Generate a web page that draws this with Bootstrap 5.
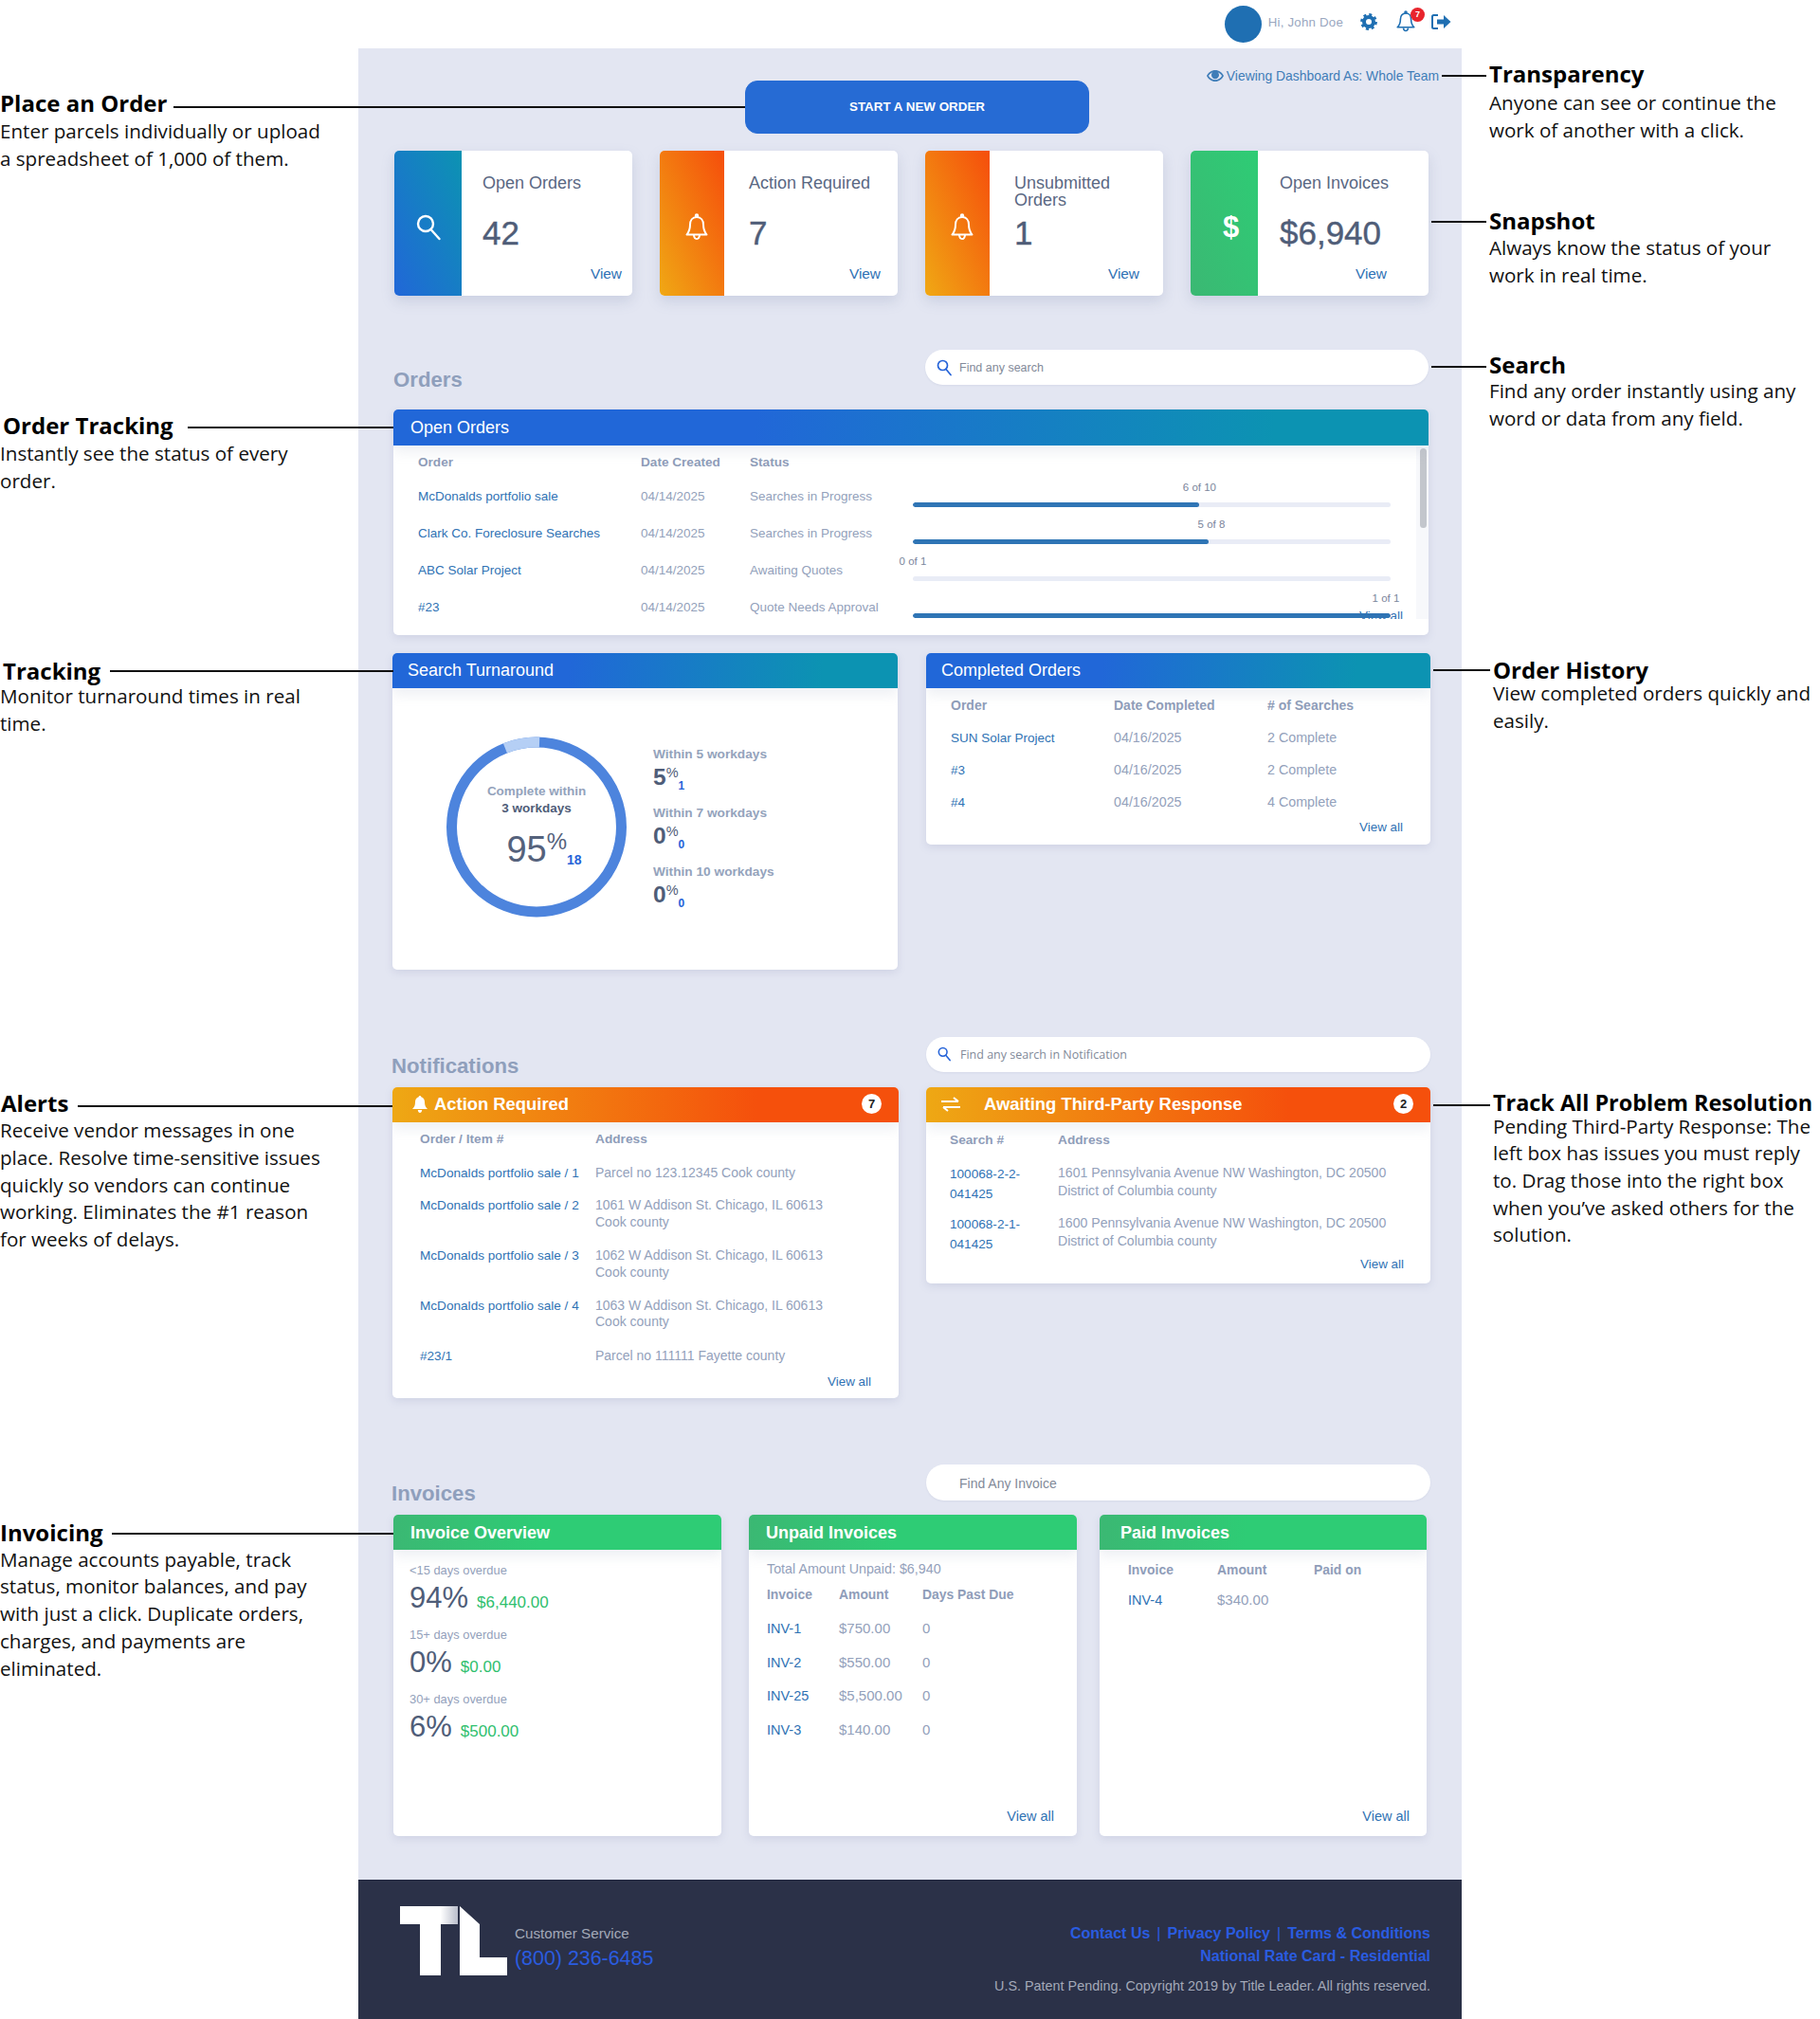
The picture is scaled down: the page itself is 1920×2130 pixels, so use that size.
<!DOCTYPE html>
<html lang="en">

<head>
    <meta charset="UTF-8" />
    <meta name="viewport" content="width=device-width, initial-scale=1.0" />
    <title>Title Leader Dashboard</title>
    <link href="https://cdn.jsdelivr.net/npm/bootstrap@5.3.0/dist/css/bootstrap.min.css" rel="stylesheet" />
    <style>
        body { background: #fff; font-family: "Liberation Sans", Arial, sans-serif; color: #4f5d78; }
        a { text-decoration: none; color: #2f72b4; }
        .page-wrap { width: 1920px; height: 2130px; overflow: hidden; }
        .side-col { width: 378px; flex: none; }
        .main-col { width: 1164px; flex: none; background: #e3e6f2; }

        /* side notes */
        .note { position: relative; font-family: "Open Sans", sans-serif; color: #111; }
        .note-title { font-size: 24px; font-weight: 700; line-height: 30px; color: #000; white-space: nowrap; }
        .note-body { font-size: 20.6px; line-height: 28.7px; white-space: nowrap; }
        .leader { position: absolute; height: 2px; background: #111; z-index: 5; }
        .n1 { margin-top: 94px; }
        .n1 .leader { left: 183px; width: 603px; top: 18px; }
        .n2 { margin-top: 253px; }
        .n2 .note-title, .n3 .note-title { padding-left: 3px; }
        .n2 .leader { left: 198px; width: 217px; top: 16px; }
        .n3 { margin-top: 171px; }
        .n3 .note-title { margin-bottom: -3px; }
        .n3 .leader { left: 116px; width: 299px; top: 14px; }
        .n4 { margin-top: 372px; }
        .n4 .note-title { padding-left: 1px; margin-bottom: -1px; }
        .n4 .leader { left: 82px; width: 332px; top: 17px; }
        .n5 { margin-top: 280px; }
        .n5 .note-title { margin-bottom: -1px; }
        .n5 .leader { left: 118px; width: 297px; top: 15px; }
        .r1, .r2, .r3 { padding-left: 29px; }
        .r4, .r5 { padding-left: 33px; }
        .r1 { margin-top: 63px; }
        .r1 .note-title { margin-bottom: 1px; }
        .r2 .note-title { margin-bottom: -1px; }
        .r3 .note-title { margin-bottom: -2px; }
        .r1 .leader { left: -21px; width: 47px; top: 16px; }
        .r2 { margin-top: 67px; }
        .r2 .leader { left: -32px; width: 58px; top: 15px; }
        .r3 { margin-top: 65px; }
        .r3 .leader { left: -32px; width: 58px; top: 16px; }
        .r4 { margin-top: 237px; }
        .r4 .note-title { margin-bottom: -5px; }
        .r4 .leader { left: -30px; width: 60px; top: 14px; }
        .r5 { margin-top: 373px; }
        .r5 .note-title { margin-bottom: -4px; font-size: 23.4px; }
        .r5 .leader { left: -30px; width: 60px; top: 17px; }

        /* top bar */
        .top-strip { height: 51px; background: #fff; padding-right: 11px; }
        .avatar-dot { width: 39px; height: 39px; border-radius: 50%; background: #1f6fb2; margin-right: 7px; }
        .hello-text { font-size: 13.3px; color: #9aa7bf; margin: 0 18px 3px 0; letter-spacing: .2px; }
        .top-icon { margin-bottom: 6px; }
        .bell-wrap { position: relative; width: 22px; height: 24px; margin: 0 16px 6px 19px; }
        .bell-count { position: absolute; top: -3px; right: -9px; width: 15px; height: 15px; border-radius: 50%; background: #e8242c; color: #fff; font-size: 9px; font-weight: 700; line-height: 15px; text-align: center; }

        .order-row { padding: 21px 24px 0 408px; }
        .start-btn { width: 363px; height: 56px; margin-top: 13px; background: #266bd4; border-color: #266bd4; border-radius: 13px; color: #fff; font-size: 13.4px; font-weight: 700; }
        .view-as { font-size: 13.9px; line-height: 16px; color: #3f7db8; gap: 3px; }

        /* stat cards */
        .stat-row { margin: 18px 35px 0 38px; gap: 29px; }
        .stat-box { flex: 1 1 0; height: 153px; border: 0; border-radius: 5px; box-shadow: 0 6px 14px rgba(120, 130, 170, .22); overflow: hidden; flex-direction: row; }
        .stat-side { width: 68px; flex: none; color: #fff; padding-top: 8px; }
        .stat-side-wide { width: 71px; }
        .grad-blue { background: linear-gradient(to top right, #2167d8, #0c93b2); }
        .grad-orange { background: linear-gradient(to top right, #f0a814, #f5520c 95%); padding-left: 10px; }
        .grad-green { background: linear-gradient(to top right, #3bb873, #2ecc75); padding-left: 14px; }
        .dollar-sign { font-size: 31px; font-weight: 700; line-height: 1; }
        .stat-main { position: relative; flex: 1; padding: 25px 0 0 22px; }
        .stat-main-b { padding-left: 26px; }
        .stat-main-c { padding-left: 23px; }
        .stat-title { font-size: 18px; line-height: 18px; height: 36px; color: #5a6883; }
        .stat-num { font-size: 35px; line-height: 40px; margin-top: 6px; color: #4f5d78; -webkit-text-stroke: .4px #4f5d78; }
        .stat-link { position: absolute; right: 11px; bottom: 14px; font-size: 15.4px; line-height: 18px; }
        .stat-link-a { right: 18px; }
        .stat-link-c { right: 25px; }
        .stat-link-b { right: 44px; }

        /* section heads */
        .section-head { margin-left: 37px; margin-right: 35px; height: 63px; }
        .section-head-tall { margin-right: 33px; height: 53px; margin-left: 35px; }
        .gap-orders { margin-top: 57px; }
        .gap-notif { margin-top: 71px; }
        .gap-invoices { margin-top: 70px; }
        .section-name { font-size: 22.2px; line-height: 28px; font-weight: 700; color: #8f9fbc; margin-top: 18px; }
        .section-head-tall .section-name { margin-top: 17px; }
        .find-box { position: relative; width: 531px; }
        .section-head-tall .find-box { width: 532px; }
        .find-box .form-control { height: 37px; border: 0; border-radius: 19px; padding: 0 12px 0 36px; font-size: 12.5px; box-shadow: 0 1px 2px rgba(120, 130, 170, .12); }
        .find-box .form-control::placeholder { color: #828a99; opacity: 1; }
        .find-box svg { position: absolute; left: 12px; top: 10px; }
        .find-open .form-control { font-family: "Open Sans", sans-serif; }
        .find-plain .form-control { font-size: 14px; height: 38px; padding: 2px 12px 0 35px; }

        /* panels */
        .panel { border: 0; border-radius: 5px; box-shadow: 0 3px 9px rgba(120, 130, 170, .18); overflow: hidden; }
        .panel-head { height: 37px; border: 0; border-radius: 0 !important; padding: 0 0 0 18px; color: #fff; font-size: 18px; line-height: 37px; box-shadow: 0 7px 13px rgba(150, 160, 185, .16); position: relative; z-index: 1; display: flex; align-items: center; }
        .head-blue { background: linear-gradient(95deg, #2167d8 35%, #0c93b2 85%); }
        .head-orange { background: linear-gradient(90deg, #eea814, #f5500c 72%); font-weight: 700; font-size: 18.4px; padding-bottom: 2px; }
        .head-green { background: linear-gradient(95deg, #3bb873, #2ecc75 45%); font-weight: 700; padding-top: 2px; }
        .count-dot { width: 21px; height: 21px; border-radius: 50%; background: #fff; color: #222; font-size: 13px; font-weight: 700; line-height: 21px; text-align: center; margin-left: auto; }

        .data-table { table-layout: fixed; margin: 0; font-size: 13.6px; line-height: 17px; }
        .data-table th, .data-table td { padding: 0; background: transparent; color: #93a1bb; vertical-align: top; font-weight: 400; }
        .data-table th { font-weight: 700; color: #8f9db9; }
        .data-table td a { color: #2f72b4; }
        .more-link { font-size: 13.4px; line-height: 18px; display: block; text-align: right; }

        .panel-open { margin: 0 35px 0 37px; height: 238px; }
        .panel-open .panel-head { height: 38px; }
        .open-scroll { position: relative; height: 183px; overflow: hidden; }
        .tbl-open { margin-left: 26px; width: 1026px; font-size: 13.5px; }
        .tbl-open th { height: 34px; line-height: 30px; padding-top: 3px; font-size: 13.6px; }
        .tbl-open td { height: 39px; padding-top: 11px; }
        .tbl-open th:nth-child(1) { width: 235px; }
        .tbl-open th:nth-child(2) { width: 115px; }
        .tbl-open th:nth-child(3) { width: 172px; }
        .tbl-open th:nth-child(4) { width: 504px; }
        .tbl-open td.prog-cell { padding-top: 26px; position: relative; }
        .prog-track { position: relative; }
        .prog-track .progress { height: 5px; background: #e9ecf6; border-radius: 3px; }
        .prog-track .progress-bar { background: #2f75b5; border-radius: 3px; }
        .prog-label { position: absolute; top: -23px; transform: translateX(-50%); font-size: 11.5px; line-height: 14px; color: #7b869c; white-space: nowrap; }
        .scroll-track { position: absolute; top: 1px; right: 0; width: 13px; bottom: 0; background: #f7f8fb; }
        .scroll-thumb { position: absolute; top: 2px; left: 4px; width: 7px; height: 84px; border-radius: 4px; background: #c3c6cc; }
        .open-more { position: absolute; right: 27px; bottom: -6px; }

        .pair-row { margin: 19px 33px 0 36px; gap: 30px; align-items: flex-start; }
        .panel-turn { width: 533px; height: 334px; }
        .panel-turn .panel-head { padding-left: 16px; }
        .panel-done { width: 532px; height: 202px; }
        .panel-done .panel-head { padding-left: 16px; }
        .turn-body { padding: 51px 0 0 57px; gap: 28px; }
        .ring-wrap { position: relative; width: 190px; height: 191px; flex: none; }
        .ring-text { position: absolute; inset: 0; text-align: center; padding-top: 49px; font-size: 13.5px; line-height: 18px; font-weight: 700; color: #94a3bc; }
        .ring-days { color: #4f5d78; }
        .ring-num { font-size: 38px; line-height: 44px; margin-top: 4px; padding-left: 16px; font-weight: 400; color: #55627c; white-space: nowrap; }
        .ring-pct { font-size: 24px; vertical-align: 13px; }
        .ring-sub { font-size: 14px; font-weight: 700; color: #2563d8; vertical-align: -3px; line-height: 1; }
        .turn-stats { padding-top: 10px; }
        .turn-item { height: 62px; }
        .turn-label { font-size: 13.7px; line-height: 18px; font-weight: 700; color: #94a3bc; }
        .turn-num { font-size: 24.5px; line-height: 26px; margin-top: -7px; padding-top: 4px; color: #4f5d78; font-weight: 700; white-space: nowrap; }
        .turn-pct { font-size: 14.5px; font-weight: 400; vertical-align: 8px; }
        .turn-sub { font-size: 12px; color: #2563d8; vertical-align: -5px; line-height: 1; }

        .tbl-done { margin-left: 26px; width: 484px; font-size: 14.3px; }
        .tbl-done th { height: 36px; line-height: 36px; font-size: 14px; }
        .tbl-done td { height: 34px; padding-top: 8px; }
        .tbl-done td a { font-size: 13.5px; }
        .tbl-done th:nth-child(1) { width: 172px; }
        .tbl-done th:nth-child(2) { width: 162px; }
        .tbl-done th:nth-child(3) { width: 150px; }
        .done-more { padding-right: 29px; }

        .panel-action { width: 534px; height: 328px; }
        .panel-wait { width: 532px; height: 207px; }
        .notif-row { margin: 0 33px 0 36px; gap: 29px; align-items: flex-start; }
        .bell-solid { margin: 0 7px 0 3px; }
        .arrows-icon { margin-right: 25px; margin-left: -2px; }
        .panel-action .count-dot { margin-right: 18px; }
        .panel-wait .count-dot { margin-right: 18px; }
        .tbl-action { margin-left: 29px; width: 495px; font-size: 14px; line-height: 17.4px; }
        .tbl-action th { height: 36px; line-height: 36px; font-size: 13.7px; }
        .tbl-action td { padding: 9px 0; }
        .tbl-action td a { font-size: 13.6px; }
        .tbl-action tr.one-line td { padding: 9px 0 8px; }
        .tbl-action th:nth-child(1) { width: 185px; }
        .tbl-action th:nth-child(2) { width: 310px; }
        .action-more { padding-right: 29px; margin-top: 2px; }
        .tbl-wait { margin-left: 25px; width: 484px; font-size: 14.1px; }
        .tbl-wait th { height: 37px; line-height: 37px; font-size: 13.7px; }
        .tbl-wait td { padding: 7px 0 4px; line-height: 19px; height: 53px; }
        .tbl-wait td a { line-height: 21px; display: block; font-size: 13.6px; }
        .tbl-wait th:nth-child(1) { width: 114px; }
        .tbl-wait th:nth-child(2) { width: 370px; }
        .wait-more { padding-right: 28px; margin-top: -2px; }

        .invoice-row { margin: 0 37px 0 37px; gap: 29px; }
        .invoice-row .panel { height: 339px; }
        .inv-a { width: 346px; }
        .inv-b { width: 346px; }
        .inv-c { width: 345px; margin-left: -5px; }
        .inv-c .panel-head { padding-left: 22px; }
        .invoice-body { padding: 0; flex: 1; display: flex; flex-direction: column; }
        .over-list { padding: 13px 0 0 17px; }
        .over-item { height: 68px; }
        .over-label { font-size: 12.9px; line-height: 17px; color: #93a1bb; }
        .over-num { font-size: 31px; line-height: 40px; margin-top: 1px; color: #4f5d78; white-space: nowrap; }
        .over-cash { font-size: 17px; color: #2fc06e; margin-left: 9px; }
        .unpaid-total { font-size: 14.3px; line-height: 17px; color: #93a1bb; padding: 12px 0 0 19px; }
        .tbl-unpaid { margin: 8px 0 0 19px; width: 304px; }
        .tbl-unpaid th { height: 20px; line-height: 20px; font-size: 13.9px; }
        .tbl-unpaid td { height: 35.5px; padding-top: 17px; line-height: 17px; font-size: 15px; }
        .tbl-unpaid td a { font-size: 14.5px; }
        .tbl-unpaid th:nth-child(1) { width: 76px; }
        .tbl-unpaid th:nth-child(2) { width: 88px; }
        .tbl-unpaid th:nth-child(3) { width: 140px; }
        .tbl-paid { margin: 11px 0 0 30px; width: 286px; }
        .tbl-paid th { height: 20px; line-height: 20px; font-size: 13.9px; }
        .tbl-paid td { padding-top: 13px; font-size: 15px; }
        .tbl-paid td a { font-size: 14.5px; }
        .tbl-paid th:nth-child(1) { width: 94px; }
        .tbl-paid th:nth-child(2) { width: 102px; }
        .tbl-paid th:nth-child(3) { width: 90px; }
        .inv-more { margin-top: auto; padding: 0 24px 12px 0; font-size: 14.5px; }
        .inv-c .inv-more { padding-right: 18px; }

        /* footer */
        .foot-band { margin-top: 46px; height: 147px; background: #2b3148; border-top: 1px solid #232840; padding: 27px 33px 0 44px; }
        .foot-contact { margin-left: 8px; padding-top: 19px; }
        .foot-label { font-size: 15.2px; line-height: 20px; color: #a3a9b8; }
        .foot-phone { font-size: 21.4px; line-height: 32px; color: #2a5ce0; }
        .foot-links { padding-top: 17px; text-align: right; }
        .foot-links a { color: #2a5ce0; font-size: 16px; font-weight: 700; line-height: 23px; }
        .foot-sep { color: #2a5ce0; margin: 0 7px; font-size: 16px; }
        .foot-copy { color: #a3a9b8; font-size: 14.4px; line-height: 18px; margin-top: 10px; }
    </style>
</head>

<body>
    <div class="page-wrap d-flex">

        <!-- left notes -->
        <div class="side-col">
            <div class="note n1">
                <div class="note-title">Place an Order</div>
                <div class="note-body">Enter parcels individually or upload<br>a spreadsheet of 1,000 of them.</div>
                <span class="leader"></span>
            </div>
            <div class="note n2">
                <div class="note-title">Order Tracking</div>
                <div class="note-body">Instantly see the status of every<br>order.</div>
                <span class="leader"></span>
            </div>
            <div class="note n3">
                <div class="note-title">Tracking</div>
                <div class="note-body">Monitor turnaround times in real<br>time.</div>
                <span class="leader"></span>
            </div>
            <div class="note n4">
                <div class="note-title">Alerts</div>
                <div class="note-body">Receive vendor messages in one<br>place. Resolve time-sensitive issues<br>quickly so vendors can continue<br>working. Eliminates the #1 reason<br>for weeks of delays.</div>
                <span class="leader"></span>
            </div>
            <div class="note n5">
                <div class="note-title">Invoicing</div>
                <div class="note-body">Manage accounts payable, track<br>status, monitor balances, and pay<br>with just a click. Duplicate orders,<br>charges, and payments are<br>eliminated.</div>
                <span class="leader"></span>
            </div>
        </div>

        <!-- dashboard -->
        <div class="main-col">
            <div class="top-strip d-flex align-items-center justify-content-end">
                <span class="avatar-dot"></span>
                <span class="hello-text">Hi, John Doe</span>
                <svg class="top-icon" width="18" height="18" viewBox="0 0 18 18">
                    <circle cx="9" cy="9" r="5" fill="none" stroke="#1f6fb2" stroke-width="4" />
                    <circle cx="9" cy="9" r="7.6" fill="none" stroke="#1f6fb2" stroke-width="2.6" stroke-dasharray="3 2.97" />
                </svg>
                <span class="bell-wrap">
                    <svg width="22" height="24" viewBox="0 0 22 24" fill="none" stroke="#1f6fb2" stroke-width="1.6" stroke-linejoin="round">
                        <path d="M11 3c-3.6 0-5.6 2.8-5.6 6.2 0 4.6-1.2 6.6-3.2 8.6h17.6c-2-2-3.2-4-3.2-8.6C16.6 5.800 14.600 3 11 3z" />
                        <path d="M8.500 18.500c.2 2 1.200 3 2.500 3s2.300-1 2.500-3" />
                        <circle cx="11" cy="2" r="1" />
                    </svg>
                    <span class="bell-count">7</span>
                </span>
                <svg class="top-icon" width="21" height="18" viewBox="0 0 21 18" fill="none">
                    <path d="M7 2H2.500C1.700 2 1 2.700 1 3.500v11c0 .8.700 1.500 1.500 1.500H7" stroke="#1f6fb2" stroke-width="2" />
                    <path d="M6 6.500h7V2l7.500 7-7.500 7v-4.500H6z" fill="#1f6fb2" />
                </svg>
            </div>

            <div class="order-row d-flex align-items-start justify-content-between">
                <button type="button" class="btn start-btn">START A NEW ORDER</button>
                <a href="#" class="view-as d-flex align-items-center">
                    <svg width="18" height="12" viewBox="0 0 18 12">
                        <path d="M9 0C5 0 1.800 2.400 0 6c1.800 3.600 5 6 9 6s7.200-2.400 9-6c-1.800-3.600-5-6-9-6zm0 10.300C6 10.300 3.400 8.600 1.900 6 3 4.200 4.500 2.900 6.300 2.200 5.500 3 5 4 5 5.200c0 2.200 1.800 4 4 4s4-1.800 4-4c0-1.200-.5-2.200-1.300-3 1.800.7 3.300 2 4.400 3.800-1.500 2.600-4.100 4.300-7.100 4.300z" fill="#3f7db8" />
                    </svg>
                    Viewing Dashboard As: Whole Team
                </a>
            </div>

            <div class="stat-row d-flex">
                <div class="card stat-box">
                    <div class="stat-side stat-side-wide grad-blue d-flex align-items-center justify-content-center">
                        <svg width="28" height="28" viewBox="0 0 28 28" fill="none" stroke="#fff" stroke-width="2.400" stroke-linecap="round">
                            <circle cx="11" cy="10" r="8" />
                            <path d="M16.500 16l9 10" />
                        </svg>
                    </div>
                    <div class="stat-main">
                        <div class="stat-title">Open Orders</div>
                        <div class="stat-num">42</div>
                        <a href="#" class="stat-link">View</a>
                    </div>
                </div>
                <div class="card stat-box">
                    <div class="stat-side grad-orange d-flex align-items-center justify-content-center">
                        <svg width="26" height="30" viewBox="0 0 26 30" fill="none" stroke="#fff" stroke-width="2" stroke-linejoin="round">
                            <path d="M13 4c-4.500 0-7 3.500-7 8 0 6-1.500 8-3.500 10.500h21C21.500 20 20 18 20 12c0-4.500-2.500-8-7-8z" />
                            <path d="M10 23c.2 2.500 1.400 4 3 4s2.800-1.500 3-4" />
                            <circle cx="13" cy="2.500" r="1.200" />
                        </svg>
                    </div>
                    <div class="stat-main stat-main-b">
                        <div class="stat-title">Action Required</div>
                        <div class="stat-num">7</div>
                        <a href="#" class="stat-link stat-link-a">View</a>
                    </div>
                </div>
                <div class="card stat-box">
                    <div class="stat-side grad-orange d-flex align-items-center justify-content-center">
                        <svg width="26" height="30" viewBox="0 0 26 30" fill="none" stroke="#fff" stroke-width="2" stroke-linejoin="round">
                            <path d="M13 4c-4.500 0-7 3.500-7 8 0 6-1.500 8-3.500 10.500h21C21.500 20 20 18 20 12c0-4.500-2.500-8-7-8z" />
                            <path d="M10 23c.2 2.500 1.400 4 3 4s2.800-1.500 3-4" />
                            <circle cx="13" cy="2.500" r="1.200" />
                        </svg>
                    </div>
                    <div class="stat-main stat-main-b">
                        <div class="stat-title">Unsubmitted Orders</div>
                        <div class="stat-num">1</div>
                        <a href="#" class="stat-link stat-link-c">View</a>
                    </div>
                </div>
                <div class="card stat-box">
                    <div class="stat-side stat-side-wide grad-green d-flex align-items-center justify-content-center">
                        <span class="dollar-sign">$</span>
                    </div>
                    <div class="stat-main stat-main-c">
                        <div class="stat-title">Open Invoices</div>
                        <div class="stat-num">$6,940</div>
                        <a href="#" class="stat-link stat-link-b">View</a>
                    </div>
                </div>
            </div>

            <!-- orders -->
            <div class="section-head gap-orders d-flex justify-content-between">
                <div class="section-name">Orders</div>
                <div class="find-box">
                    <svg width="16" height="18" viewBox="0 0 16 18" fill="none" stroke="#2563d8" stroke-width="1.700" stroke-linecap="round">
                        <circle cx="6.500" cy="6.500" r="5" />
                        <path d="M10 10.500l5 6" />
                    </svg>
                    <input type="text" class="form-control" placeholder="Find any search" />
                </div>
            </div>

            <div class="card panel panel-open">
                <div class="card-header panel-head head-blue">Open Orders</div>
                <div class="open-scroll">
                    <table class="table table-borderless data-table tbl-open">
                        <thead>
                            <tr><th>Order</th><th>Date Created</th><th>Status</th><th></th></tr>
                        </thead>
                        <tbody>
                            <tr>
                                <td><a href="#">McDonalds portfolio sale</a></td><td>04/14/2025</td><td>Searches in Progress</td>
                                <td class="prog-cell"><div class="prog-track"><span class="prog-label" style="left:60%">6 of 10</span><div class="progress"><div class="progress-bar" style="width:60%"></div></div></div></td>
                            </tr>
                            <tr>
                                <td><a href="#">Clark Co. Foreclosure Searches</a></td><td>04/14/2025</td><td>Searches in Progress</td>
                                <td class="prog-cell"><div class="prog-track"><span class="prog-label" style="left:62.5%">5 of 8</span><div class="progress"><div class="progress-bar" style="width:62%"></div></div></div></td>
                            </tr>
                            <tr>
                                <td><a href="#">ABC Solar Project</a></td><td>04/14/2025</td><td>Awaiting Quotes</td>
                                <td class="prog-cell"><div class="prog-track"><span class="prog-label" style="left:0%">0 of 1</span><div class="progress"><div class="progress-bar" style="width:0%"></div></div></div></td>
                            </tr>
                            <tr>
                                <td><a href="#">#23</a></td><td>04/14/2025</td><td>Quote Needs Approval</td>
                                <td class="prog-cell"><div class="prog-track"><span class="prog-label" style="left:99%">1 of 1</span><div class="progress"><div class="progress-bar" style="width:100%"></div></div></div></td>
                            </tr>
                        </tbody>
                    </table>
                    <a href="#" class="more-link open-more">View all</a>
                    <div class="scroll-track"><div class="scroll-thumb"></div></div>
                </div>
            </div>

            <div class="pair-row d-flex">
                <div class="card panel panel-turn">
                    <div class="card-header panel-head head-blue">Search Turnaround</div>
                    <div class="turn-body d-flex">
                        <div class="ring-wrap">
                            <svg width="190" height="191" viewBox="0 0 190 191" fill="none">
                                <circle cx="95" cy="95.500" r="89.500" stroke="#4d84dd" stroke-width="11" />
                                <circle cx="95" cy="95.500" r="89.500" stroke="#b5cff5" stroke-width="11" pathLength="360" stroke-dasharray="23.700 336.300" transform="rotate(-111.700 95 95.500)" />
                            </svg>
                            <div class="ring-text">
                                <div>Complete within</div>
                                <div class="ring-days">3 workdays</div>
                                <div class="ring-num">95<span class="ring-pct">%</span><span class="ring-sub">18</span></div>
                            </div>
                        </div>
                        <div class="turn-stats">
                            <div class="turn-item">
                                <div class="turn-label">Within 5 workdays</div>
                                <div class="turn-num">5<span class="turn-pct">%</span><span class="turn-sub">1</span></div>
                            </div>
                            <div class="turn-item">
                                <div class="turn-label">Within 7 workdays</div>
                                <div class="turn-num">0<span class="turn-pct">%</span><span class="turn-sub">0</span></div>
                            </div>
                            <div class="turn-item">
                                <div class="turn-label">Within 10 workdays</div>
                                <div class="turn-num">0<span class="turn-pct">%</span><span class="turn-sub">0</span></div>
                            </div>
                        </div>
                    </div>
                </div>
                <div class="card panel panel-done">
                    <div class="card-header panel-head head-blue">Completed Orders</div>
                    <table class="table table-borderless data-table tbl-done">
                        <thead>
                            <tr><th>Order</th><th>Date Completed</th><th># of Searches</th></tr>
                        </thead>
                        <tbody>
                            <tr><td><a href="#">SUN Solar Project</a></td><td>04/16/2025</td><td>2 Complete</td></tr>
                            <tr><td><a href="#">#3</a></td><td>04/16/2025</td><td>2 Complete</td></tr>
                            <tr><td><a href="#">#4</a></td><td>04/16/2025</td><td>4 Complete</td></tr>
                        </tbody>
                    </table>
                    <a href="#" class="more-link done-more">View all</a>
                </div>
            </div>

            <!-- notifications -->
            <div class="section-head section-head-tall gap-notif d-flex justify-content-between">
                <div class="section-name">Notifications</div>
                <div class="find-box find-open">
                    <svg width="14" height="16" viewBox="0 0 16 18" fill="none" stroke="#2563d8" stroke-width="1.800" stroke-linecap="round">
                        <circle cx="6.500" cy="6.500" r="5" />
                        <path d="M10 10.500l5 6" />
                    </svg>
                    <input type="text" class="form-control" placeholder="Find any search in Notification" />
                </div>
            </div>

            <div class="notif-row d-flex">
                <div class="card panel panel-action">
                    <div class="card-header panel-head head-orange">
                        <svg class="bell-solid" width="16" height="18" viewBox="0 0 16 18" fill="#fff">
                            <path d="M8 0c-.8 0-1.300.6-1.300 1.300C4.200 1.900 3 4 3 6.500c0 4-1 5.500-3 7.500h16c-2-2-3-3.500-3-7.500 0-2.500-1.200-4.600-3.700-5.200C9.300.6 8.800 0 8 0z" />
                            <path d="M5.800 15c.2 1.800 1.100 3 2.200 3s2-1.200 2.200-3z" />
                        </svg>
                        Action Required
                        <span class="count-dot">7</span>
                    </div>
                    <table class="table table-borderless data-table tbl-action">
                        <thead>
                            <tr><th>Order / Item #</th><th>Address</th></tr>
                        </thead>
                        <tbody>
                            <tr class="one-line"><td><a href="#">McDonalds portfolio sale / 1</a></td><td>Parcel no 123.12345 Cook county</td></tr>
                            <tr><td><a href="#">McDonalds portfolio sale / 2</a></td><td>1061 W Addison St. Chicago, IL 60613<br>Cook county</td></tr>
                            <tr><td><a href="#">McDonalds portfolio sale / 3</a></td><td>1062 W Addison St. Chicago, IL 60613<br>Cook county</td></tr>
                            <tr><td><a href="#">McDonalds portfolio sale / 4</a></td><td>1063 W Addison St. Chicago, IL 60613<br>Cook county</td></tr>
                            <tr class="one-line"><td><a href="#">#23/1</a></td><td>Parcel no 111111 Fayette county</td></tr>
                        </tbody>
                    </table>
                    <a href="#" class="more-link action-more">View all</a>
                </div>
                <div class="card panel panel-wait">
                    <div class="card-header panel-head head-orange">
                        <svg class="arrows-icon" width="20" height="16" viewBox="0 0 20 16" fill="none" stroke="#fff" stroke-width="2">
                            <path d="M0 5h18M13 1l5 4M20 11H2M7 15l-5-4" />
                        </svg>
                        Awaiting Third-Party Response
                        <span class="count-dot">2</span>
                    </div>
                    <table class="table table-borderless data-table tbl-wait">
                        <thead>
                            <tr><th>Search #</th><th>Address</th></tr>
                        </thead>
                        <tbody>
                            <tr><td><a href="#">100068-2-2-<br>041425</a></td><td>1601 Pennsylvania Avenue NW Washington, DC 20500<br>District of Columbia county</td></tr>
                            <tr><td><a href="#">100068-2-1-<br>041425</a></td><td>1600 Pennsylvania Avenue NW Washington, DC 20500<br>District of Columbia county</td></tr>
                        </tbody>
                    </table>
                    <a href="#" class="more-link wait-more">View all</a>
                </div>
            </div>

            <!-- invoices -->
            <div class="section-head section-head-tall gap-invoices d-flex justify-content-between">
                <div class="section-name">Invoices</div>
                <div class="find-box find-plain">
                    <input type="text" class="form-control" placeholder="Find Any Invoice" />
                </div>
            </div>

            <div class="invoice-row d-flex">
                <div class="card panel inv-a">
                    <div class="card-header panel-head head-green">Invoice Overview</div>
                    <div class="invoice-body over-list">
                        <div class="over-item">
                            <div class="over-label">&lt;15 days overdue</div>
                            <div class="over-num">94%<span class="over-cash">$6,440.00</span></div>
                        </div>
                        <div class="over-item">
                            <div class="over-label">15+ days overdue</div>
                            <div class="over-num">0%<span class="over-cash">$0.00</span></div>
                        </div>
                        <div class="over-item">
                            <div class="over-label">30+ days overdue</div>
                            <div class="over-num">6%<span class="over-cash">$500.00</span></div>
                        </div>
                    </div>
                </div>
                <div class="card panel inv-b">
                    <div class="card-header panel-head head-green">Unpaid Invoices</div>
                    <div class="invoice-body">
                        <div class="unpaid-total">Total Amount Unpaid: $6,940</div>
                        <table class="table table-borderless data-table tbl-unpaid">
                            <thead>
                                <tr><th>Invoice</th><th>Amount</th><th>Days Past Due</th></tr>
                            </thead>
                            <tbody>
                                <tr><td><a href="#">INV-1</a></td><td>$750.00</td><td>0</td></tr>
                                <tr><td><a href="#">INV-2</a></td><td>$550.00</td><td>0</td></tr>
                                <tr><td><a href="#">INV-25</a></td><td>$5,500.00</td><td>0</td></tr>
                                <tr><td><a href="#">INV-3</a></td><td>$140.00</td><td>0</td></tr>
                            </tbody>
                        </table>
                        <a href="#" class="more-link inv-more">View all</a>
                    </div>
                </div>
                <div class="card panel inv-c">
                    <div class="card-header panel-head head-green">Paid Invoices</div>
                    <div class="invoice-body">
                        <table class="table table-borderless data-table tbl-paid">
                            <thead>
                                <tr><th>Invoice</th><th>Amount</th><th>Paid on</th></tr>
                            </thead>
                            <tbody>
                                <tr><td><a href="#">INV-4</a></td><td>$340.00</td><td></td></tr>
                            </tbody>
                        </table>
                        <a href="#" class="more-link inv-more">View all</a>
                    </div>
                </div>
            </div>

            <footer class="foot-band d-flex justify-content-between">
                <div class="d-flex">
                    <svg width="113" height="73" viewBox="0 0 113 73">
                        <defs>
                            <linearGradient id="tlShade" x1="0" x2="1" y1="0" y2="0">
                                <stop offset="0.7" stop-color="#fff" />
                                <stop offset="1" stop-color="#b9bdca" />
                            </linearGradient>
                        </defs>
                        <path d="M0 0h61v19H43v54H21V19H0z" fill="url(#tlShade)" />
                        <path d="M63 0l21 19v35h29v19H63z" fill="#fff" />
                    </svg>
                    <div class="foot-contact">
                        <div class="foot-label">Customer Service</div>
                        <div class="foot-phone">(800) 236-6485</div>
                    </div>
                </div>
                <div class="foot-links">
                    <div><a href="#">Contact Us</a><span class="foot-sep">|</span><a href="#">Privacy Policy</a><span class="foot-sep">|</span><a href="#">Terms &amp; Conditions</a></div>
                    <div><a href="#">National Rate Card - Residential</a></div>
                    <div class="foot-copy">U.S. Patent Pending. Copyright 2019 by Title Leader. All rights reserved.</div>
                </div>
            </footer>
        </div>

        <!-- right notes -->
        <div class="side-col">
            <div class="note r1">
                <div class="note-title">Transparency</div>
                <div class="note-body">Anyone can see or continue the<br>work of another with a click.</div>
                <span class="leader"></span>
            </div>
            <div class="note r2">
                <div class="note-title">Snapshot</div>
                <div class="note-body">Always know the status of your<br>work in real time.</div>
                <span class="leader"></span>
            </div>
            <div class="note r3">
                <div class="note-title">Search</div>
                <div class="note-body">Find any order instantly using any<br>word or data from any field.</div>
                <span class="leader"></span>
            </div>
            <div class="note r4">
                <div class="note-title">Order History</div>
                <div class="note-body">View completed orders quickly and<br>easily.</div>
                <span class="leader"></span>
            </div>
            <div class="note r5">
                <div class="note-title">Track All Problem Resolution</div>
                <div class="note-body">Pending Third-Party Response: The<br>left box has issues you must reply<br>to. Drag those into the right box<br>when you’ve asked others for the<br>solution.</div>
                <span class="leader"></span>
            </div>
        </div>
    </div>

    <script src="https://cdn.jsdelivr.net/npm/bootstrap@5.3.0/dist/js/bootstrap.bundle.min.js"></script>
</body>

</html>
